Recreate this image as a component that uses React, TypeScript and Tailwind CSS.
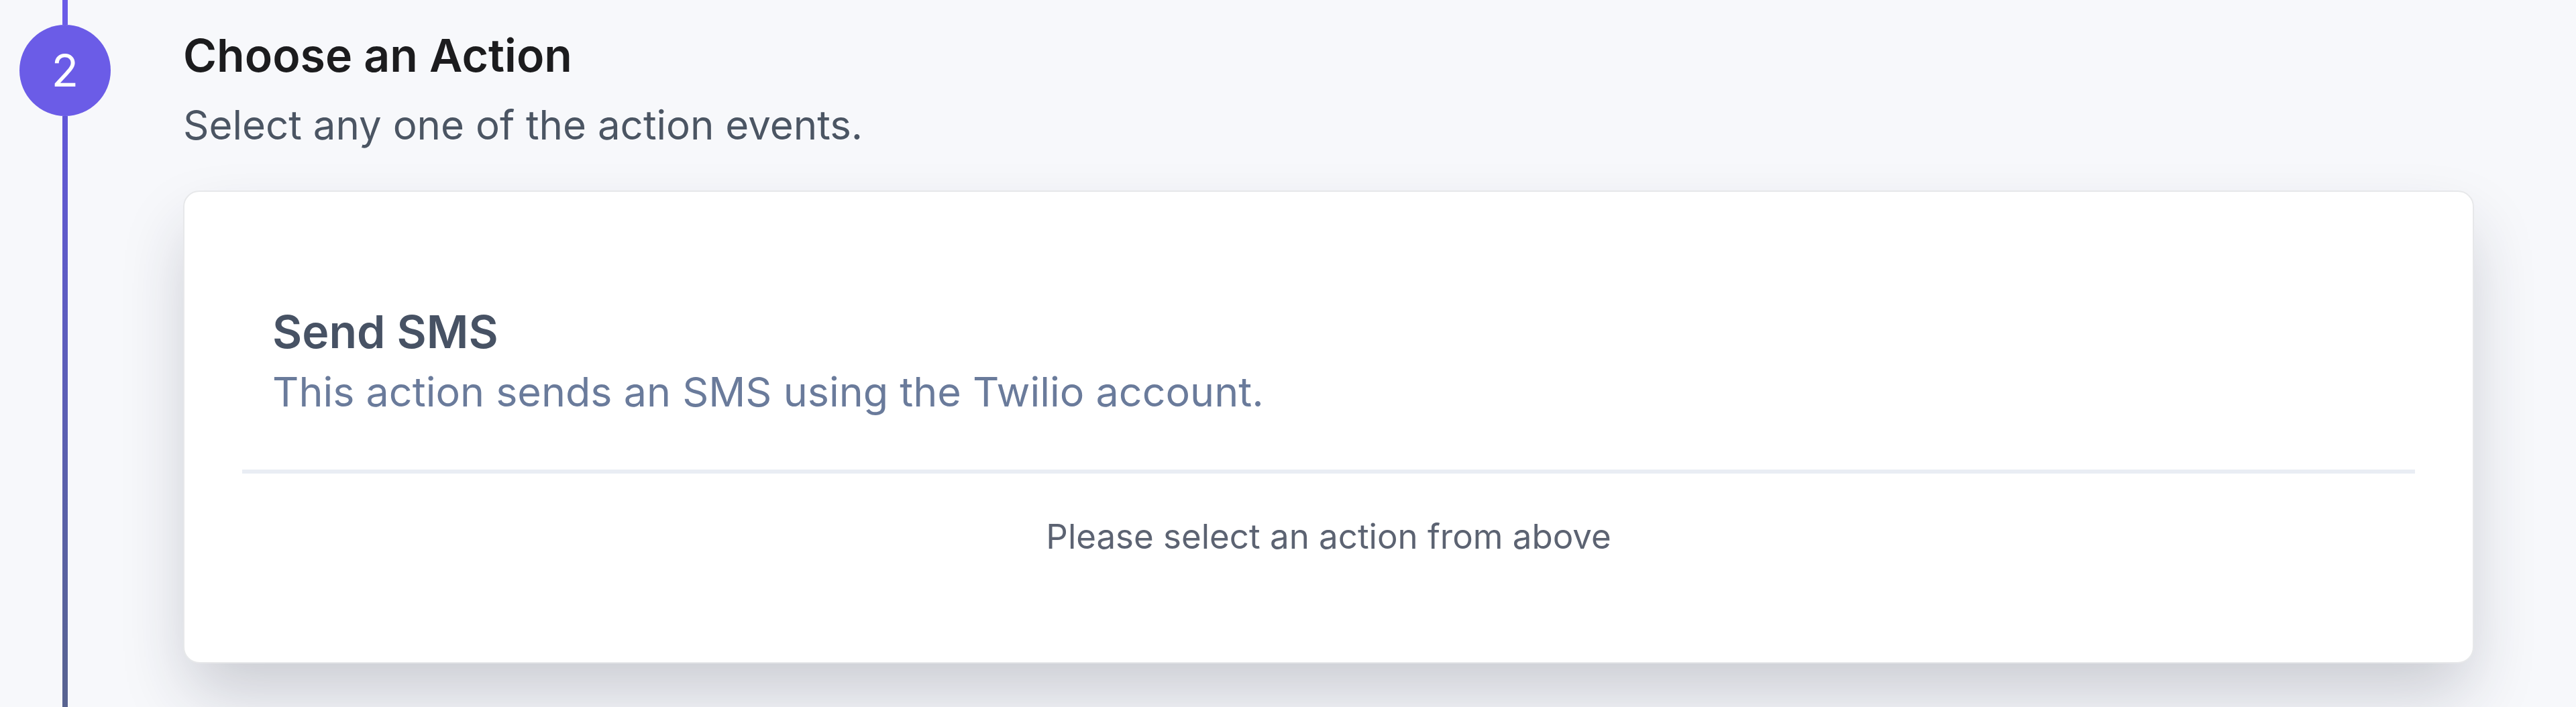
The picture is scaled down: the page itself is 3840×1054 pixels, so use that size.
export default function App() {
  return (
    <div className="flex h-screen overflow-hidden bg-[#f7f8fb] font-['Inter',sans-serif]">
      {/* step rail */}
      <div className="flex w-[194px] shrink-0 flex-col items-center">
        <div className="h-[37px] w-2 bg-[#6b5ce7]" />
        <div className="flex h-[136px] w-[136px] shrink-0 items-center justify-center rounded-full bg-[#6b5ce7] text-[66px] leading-none text-white">
          2
        </div>
        <div className="w-2 flex-1 bg-gradient-to-b from-[#6257d8] to-[#586390]" />
      </div>

      <div className="ml-[79px] mr-[152px] flex-1 pt-[42px]">
        <h2 className="text-[68px] leading-[80px] font-semibold text-[#1c1c1e]">Choose an Action</h2>
        <p className="mt-6 text-[60px] leading-[80px] text-[#4b5563]">Select any one of the action events.</p>

        <div className="mt-[58px] rounded-3xl border-2 border-[#e7e8ea] bg-white px-[86px] pt-[168px] pb-[151px] shadow-[0_50px_100px_-10px_rgba(30,35,60,0.22)]">
          <div className="pl-[45px]">
            <h3 className="text-[68px] leading-[80px] font-semibold text-[#475264]">Send SMS</h3>
            <p className="mt-[10px] text-[61px] leading-[80px] text-[#6a7b9b]">
              This action sends an SMS using the Twilio account.
            </p>
          </div>
          <div className="mt-[76px] h-1.5 bg-[#e9edf4]" />
          <p className="mt-[58px] text-center text-[51px] leading-[72px] text-[#5c6372]">
            Please select an action from above
          </p>
        </div>
      </div>
    </div>
  );
}
